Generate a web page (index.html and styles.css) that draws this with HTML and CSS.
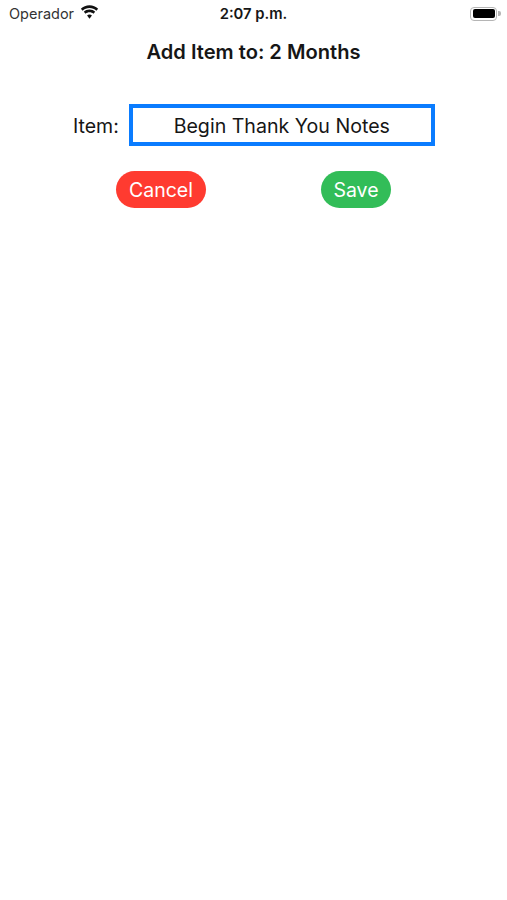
FILE: index.html
```html
<!DOCTYPE html>
<html lang="en">
<head>
    <meta charset="UTF-8">
    <meta name="viewport" content="width=device-width, initial-scale=1.0">
    <title>Add Item</title>
    <link rel="stylesheet" href="styles.css">
</head>
<body>
    <div class="status-bar">
        <div class="status-left">
            <span class="carrier">Operador</span>
            <svg class="wifi" width="19" height="14" viewBox="0 0 18 13">
                <path d="M9 2.600c2.500 0 4.800 1 6.500 2.600l1.700-1.800C15 1.300 12.200 0 9 0S3 1.300.8 3.400l1.700 1.800C4.200 3.600 6.500 2.600 9 2.600z"/>
                <path d="M9 6.700c1.400 0 2.700.5 3.700 1.400l1.700-1.800C13 5 11.100 4.200 9 4.200S5 5 3.600 6.300l1.700 1.800c1-.9 2.300-1.400 3.700-1.400z"/>
                <path d="M9 8.900c-.9 0-1.700.3-2.300.9L9 12.800l2.300-3c-.6-.6-1.400-.9-2.300-.9z"/>
            </svg>
        </div>
        <span class="clock">2:07 p.m.</span>
        <div class="battery">
            <div class="battery-body"><div class="battery-fill"></div></div>
            <div class="battery-cap"></div>
        </div>
    </div>

    <h1>Add Item to: 2 Months</h1>

    <div class="item-row">
        <label for="item">Item:</label>
        <input id="item" class="item-input" type="text" value="Begin Thank You Notes">
    </div>

    <div class="actions">
        <button class="btn btn-cancel">Cancel</button>
        <button class="btn btn-save">Save</button>
    </div>
</body>
</html>
```

FILE: styles.css
```css
body {
    margin: 0;
    background: #fff;
    color: #161616;
    font-family: Inter, "Liberation Sans", sans-serif;
}
.status-bar {
    display: grid;
    grid-template-columns: 1fr auto 1fr;
    align-items: center;
    height: 27px;
    padding: 0 6px;
}
.status-left {
    display: flex;
    align-items: center;
    gap: 6px;
    padding-left: 3px;
}
.carrier {
    font-size: 14.5px;
    color: #333;
}
.wifi {
    fill: #111;
    margin-top: -3px;
}
.clock {
    font-size: 14.8px;
    font-weight: 600;
}
.battery {
    display: flex;
    align-items: center;
    justify-content: flex-end;
    gap: 1px;
}
.battery-body {
    box-sizing: border-box;
    width: 27px;
    height: 14px;
    padding: 1.500px;
    border: 1.500px solid #b5b5b5;
    border-radius: 4px;
}
.battery-fill {
    height: 100%;
    background: #000;
    border-radius: 2px;
}
.battery-cap {
    width: 3px;
    height: 5px;
    background: #b5b5b5;
    border-radius: 0 2px 2px 0;
}
h1 {
    margin: 13px 0 0;
    font-size: 20.1px;
    line-height: 24px;
    font-weight: 600;
    text-align: center;
}
.item-row {
    display: flex;
    align-items: center;
    gap: 10px;
    margin: 40px 0 0 73px;
}
.item-row label {
    padding-top: 1px;
    font-size: 19.5px;
}
.item-input {
    box-sizing: border-box;
    width: 306px;
    height: 42px;
    padding: 2px 0 0;
    border: 4px solid #0a7cff;
    outline: none;
    background: #fff;
    color: #161616;
    font-family: inherit;
    font-size: 19.6px;
    text-align: center;
}
.actions {
    display: flex;
    gap: 115px;
    margin: 25px 0 0 116px;
}
.btn {
    height: 37px;
    padding: 0;
    border: none;
    border-radius: 19px;
    color: #fff;
    font-family: inherit;
    font-size: 19.5px;
}
.btn-cancel {
    width: 90px;
    background: #ff3b30;
}
.btn-save {
    width: 70px;
    background: #32bd58;
}
```
